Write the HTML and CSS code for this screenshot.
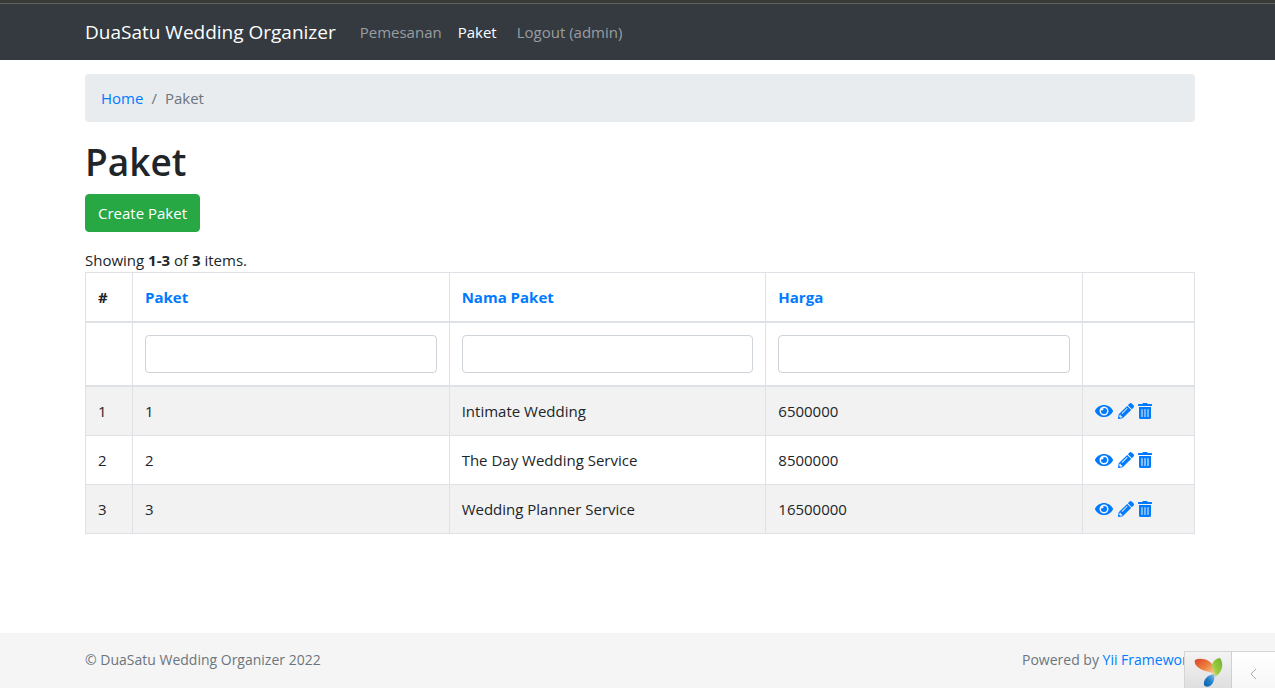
FILE: index.html
```html
<!DOCTYPE html>
<html lang="id">
<head>
<meta charset="utf-8">
<title>Paket</title>
<link rel="stylesheet" href="styles.css">
</head>
<body>
<svg class="sprite" aria-hidden="true">
  <symbol id="eye" viewBox="0 0 576 512"><path d="M573 241C518 136 411 64 288 64S58 136 3 241a32 32 0 000 30c55 105 162 177 285 177s230-72 285-177a32 32 0 000-30zM288 400a144 144 0 11144-144 144 144 0 01-144 144zm0-240a95 95 0 00-25 4 48 48 0 01-67 67 96 96 0 1092-71z"/></symbol>
  <symbol id="pencil" viewBox="0 0 512 512"><path d="M498 142l-46 46c-5 5-13 5-17 0L324 77c-5-5-5-12 0-17l46-46c19-19 49-19 68 0l60 60c19 19 19 49 0 68zm-214-42L22 362 0 484c-3 16 12 30 28 28l122-22 262-262c5-5 5-13 0-17L301 100c-4-5-12-5-17 0zM124 340c-5-6-5-14 0-20l154-154c6-5 14-5 20 0s5 14 0 20L144 340c-6 5-14 5-20 0zm-36 84h48v36l-64 12-32-31 12-65h36v48z"/></symbol>
  <symbol id="trash" viewBox="0 0 448 512"><path d="M32 464a48 48 0 0048 48h288a48 48 0 0048-48V128H32zm272-256a16 16 0 0132 0v224a16 16 0 01-32 0zm-96 0a16 16 0 0132 0v224a16 16 0 01-32 0zm-96 0a16 16 0 0132 0v224a16 16 0 01-32 0zM432 32H312l-9-19a24 24 0 00-22-13H167a24 24 0 00-22 13l-9 19H16A16 16 0 000 48v32a16 16 0 0016 16h416a16 16 0 0016-16V48a16 16 0 00-16-16z"/></symbol>
</svg>
<header class="header">
  <nav class="navbar container">
    <a class="brand" href="#">DuaSatu Wedding Organizer</a>
    <a class="nav-link" href="#">Pemesanan</a>
    <a class="nav-link active" href="#">Paket</a>
    <button class="nav-link logout" type="button">Logout (admin)</button>
  </nav>
</header>
<main class="main container">
  <nav class="breadcrumb" aria-label="breadcrumb">
    <a href="#">Home</a><span class="slash">/</span><span>Paket</span>
  </nav>
  <h1 class="title">Paket</h1>
  <a class="btn" href="#">Create Paket</a>
  <div class="summary">Showing <b>1-3</b> of <b>3</b> items.</div>
  <table class="grid">
    <colgroup><col class="col-serial"><col><col><col><col class="col-actions"></colgroup>
    <thead>
      <tr><th>#</th><th><a href="#">Paket</a></th><th><a href="#">Nama Paket</a></th><th><a href="#">Harga</a></th><th></th></tr>
      <tr>
        <td></td>
        <td><input class="filter" type="text" aria-label="Paket"></td>
        <td><input class="filter" type="text" aria-label="Nama Paket"></td>
        <td><input class="filter" type="text" aria-label="Harga"></td>
        <td></td>
      </tr>
    </thead>
    <tbody>
      <tr><td>1</td><td>1</td><td>Intimate Wedding</td><td>6500000</td>
        <td><div class="actions"><a href="#" aria-label="View"><svg class="icon wide"><use href="#eye"/></svg></a><a href="#" aria-label="Update"><svg class="icon"><use href="#pencil"/></svg></a><a href="#" aria-label="Delete"><svg class="icon narrow"><use href="#trash"/></svg></a></div></td></tr>
      <tr><td>2</td><td>2</td><td>The Day Wedding Service</td><td>8500000</td>
        <td><div class="actions"><a href="#" aria-label="View"><svg class="icon wide"><use href="#eye"/></svg></a><a href="#" aria-label="Update"><svg class="icon"><use href="#pencil"/></svg></a><a href="#" aria-label="Delete"><svg class="icon narrow"><use href="#trash"/></svg></a></div></td></tr>
      <tr><td>3</td><td>3</td><td>Wedding Planner Service</td><td>16500000</td>
        <td><div class="actions"><a href="#" aria-label="View"><svg class="icon wide"><use href="#eye"/></svg></a><a href="#" aria-label="Update"><svg class="icon"><use href="#pencil"/></svg></a><a href="#" aria-label="Delete"><svg class="icon narrow"><use href="#trash"/></svg></a></div></td></tr>
    </tbody>
  </table>
</main>
<footer class="footer">
  <div class="footer-row container">
    <span>© DuaSatu Wedding Organizer 2022</span>
    <span>Powered by <a href="#">Yii Framework</a></span>
  </div>
</footer>
<div class="debug">
  <a class="debug-logo" href="#" aria-label="Yii Debugger">
    <svg width="30" height="32" viewBox="0 0 30 32">
      <defs>
        <linearGradient id="orange" x1="0" y1="0" x2="1" y2="1"><stop offset="0" stop-color="#d9432b"/><stop offset=".5" stop-color="#ee7f3d"/><stop offset="1" stop-color="#fbd9a0"/></linearGradient>
        <linearGradient id="green" x1="1" y1="0" x2="0" y2="1"><stop offset="0" stop-color="#6db233"/><stop offset=".6" stop-color="#9ccb3b"/><stop offset="1" stop-color="#d8e79a"/></linearGradient>
        <linearGradient id="blue" x1="1" y1="0" x2="0" y2="1"><stop offset="0" stop-color="#8fc4ea"/><stop offset=".5" stop-color="#1c7fc8"/><stop offset="1" stop-color="#0b5fa8"/></linearGradient>
      </defs>
      <path fill="url(#orange)" d="M1 3C7 0 18 3 20 11c1 3 1 4 1 7C17 14 10 15 5 11 2 9 0 6 1 3z"/>
      <path fill="url(#green)" d="M26 1c4 5 3 14-5 19 0-4-3-7-3-11 0-4 4-8 8-8z"/>
      <path fill="url(#blue)" d="M20 17c1 4 0 9-4 12-2 1-5 1-6-1-1-6 4-10 10-11z"/>
    </svg>
  </a>
  <button class="debug-toggle" type="button" aria-label="Expand">
    <svg width="8" height="12" viewBox="0 0 8 12"><path d="M6 1L1 6l5 5" fill="none" stroke="#aaa" stroke-width="1"/></svg>
  </button>
</div>
</body>
</html>
```
FILE: styles.css
```css
* { box-sizing: border-box; }
body {
  margin: 0;
  min-height: 100vh;
  display: flex;
  flex-direction: column;
  background: #fff;
  color: #212529;
  font: 15px/24px "Open Sans", "Noto Sans", sans-serif;
}
a { color: #007bff; text-decoration: none; }
.sprite { display: none; }
.container { width: 100%; padding: 0 80px 0 85px; }

.header {
  background: linear-gradient(#3a3a38 3px, #63635e 3px, #63635e 4px, #343a40 4px);
  padding-top: 4px;
}
.navbar { display: flex; align-items: center; height: 56px; }
.brand { margin-right: 16px; color: #fff; font-size: 19px; line-height: 30px; }
.nav-link { padding: 8px; color: #9a9da0; }
.nav-link.active { color: #fff; }
.logout { margin-left: 4px; border: 0; background: none; font: inherit; }

.main { flex: 1; padding-top: 14px; }
.breadcrumb {
  display: flex;
  gap: 8px;
  padding: 12px 16px;
  margin-bottom: 16px;
  border-radius: 4px;
  background: #e9ecef;
  color: #6c757d;
}
.title { margin: 0 0 8px; font-size: 37px; line-height: 48px; font-weight: 600; }
.btn {
  display: inline-block;
  padding: 6px 12px;
  border: 1px solid #28a745;
  border-radius: 4px;
  background: #28a745;
  color: #fff;
  vertical-align: top;
}
.summary { margin-top: 16px; }

.grid { width: 100%; table-layout: fixed; border-collapse: collapse; }
.col-serial { width: 47px; }
.col-actions { width: 112px; }
.grid th, .grid td { padding: 12px; border: 1px solid #dee2e6; text-align: left; vertical-align: top; }
.grid thead th, .grid thead td { border-bottom-width: 2px; }
.grid tbody tr:nth-child(odd) { background: #f2f2f2; }
.filter {
  display: block;
  width: 100%;
  height: 38px;
  padding: 6px 12px;
  border: 1px solid #ced4da;
  border-radius: 4px;
  font: inherit;
}
.actions { display: flex; align-items: center; gap: 4px; height: 24px; }
.actions a { display: flex; }
.icon { width: 16px; height: 16px; fill: #007bff; }
.icon.wide { width: 18px; margin-right: 1px; }
.icon.narrow { width: 14px; }

.footer { padding: 15px 0 16px; background: #f5f5f5; color: #6c757d; font-size: 14px; }
.footer-row { display: flex; justify-content: space-between; }

.debug {
  position: fixed;
  right: 0;
  bottom: 0;
  display: flex;
  width: 91px;
  height: 37px;
  border: 1px solid #d5d5d5;
  border-width: 1px 0 0 1px;
  background: linear-gradient(#fff, #f7f7f7);
}
.debug-logo {
  display: flex;
  width: 47px;
  padding: 5px 0 0 9px;
  border-right: 1px solid #d0d0d0;
  background: linear-gradient(#f4f4f4, #dfdfdf);
  overflow: hidden;
}
.debug-toggle {
  flex: 1;
  display: flex;
  align-items: center;
  justify-content: center;
  padding: 8px 0 0;
  border: 0;
  background: none;
}
```
